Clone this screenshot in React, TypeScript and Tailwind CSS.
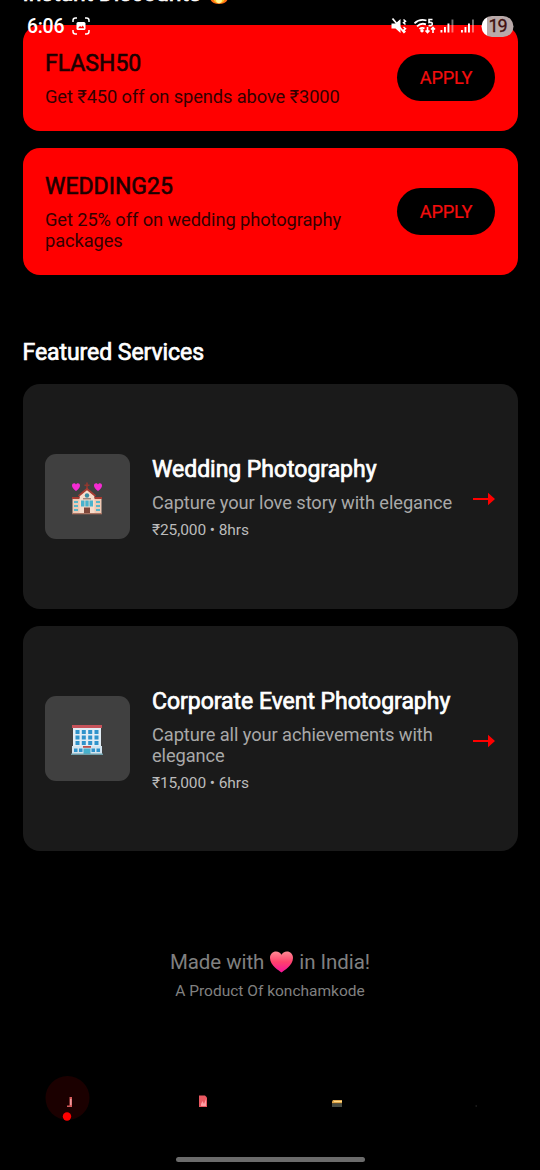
import type { ReactNode } from "react";

function Fire() {
  return (
    <svg className="mt-[3px]" width="22" height="22" viewBox="0 0 22 24">
      <path d="M11 0C13 5 21 8 21 15c0 5-4 8-10 8S1 20 1 15c0-4 2-6 4-8 0 2 1 3 2 3 3-2 2-7 4-10z" fill="#ff6d12" />
      <path d="M12 8c0 4 5 4 5 9 0 3-2 5-6 5s-6-2-6-5c0-3 2-4 3-6 1 1 1 2 2 2 2-1 1-3 2-5z" fill="#ffc928" />
      <ellipse cx="11" cy="18.5" rx="3.2" ry="3.5" fill="#fff59d" />
    </svg>
  );
}

function Chapel() {
  return (
    <svg width="32" height="34" viewBox="0 0 32 34">
      <path d="M5 10C2 7.8 1 6.300 1 4.500 1 2.100 4 1.600 5 3.600 6 1.600 9 2.100 9 4.500 9 6.300 8 7.800 5 10zM27 10c-3-2.200-4-3.700-4-5.500 0-2.400 3-2.900 4-.9 1-2 4-1.500 4 .9 0 1.800-1 3.300-4 5.500z" fill="#f52bd3" />
      <path d="M15.200 1.500h1.600v2h1.700V5h-1.700v4h-1.600V5h-1.700V3.500h1.700z" fill="#93382f" />
      <path d="M1.500 17h29v15.500h-29z" fill="#efc9b4" />
      <path d="M8.500 14L16 8.500l7.500 5.500v18.500h-15z" fill="#f7dccb" />
      <path d="M7.500 15L16 8l8.500 7" fill="none" stroke="#a83c32" strokeWidth="1.800" />
      <path d="M1 16h7.500v2H1zM23.500 16H31v2h-7.500z" fill="#a83c32" />
      <circle cx="16" cy="14.500" r="2.200" fill="#3a8ba0" />
      <path d="M12 17.800h8" stroke="#7b625b" strokeWidth="1" />
      <path d="M10 19.500h3.500v6H10zM14.300 19.500h3.400v6h-3.400zM18.500 19.500H22v6h-3.500z" fill="#49b3cd" />
      <path d="M3 20h4v2H3zM3 24h4v2H3zM3 28h4v2H3zM25 20h4v2h-4zM25 24h4v2h-4zM25 28h4v2h-4z" fill="#58b6c8" />
      <path d="M13 26.500h6v6h-6z" fill="#80483b" />
      <path d="M1 32h30v1.300H1z" fill="#aa7463" />
    </svg>
  );
}

function Office() {
  return (
    <svg width="32" height="34" viewBox="0 0 32 34">
      <path d="M2 3h28v21H2z" fill="#e2edf5" />
      <path d="M1 2h30v3H1z" fill="#c6525a" />
      <path d="M1 23h30v8H1z" fill="#d3e4ef" />
      <path d="M4.500 7h4v4h-4zM10.800 7h4v4h-4zM17.200 7h4v4h-4zM23.500 7h4v4h-4zM4.500 12.500h4v4h-4zM10.800 12.500h4v4h-4zM17.200 12.500h4v4h-4zM23.500 12.500h4v4h-4zM4.500 18h4v4h-4zM10.800 18h4v4h-4zM17.200 18h4v4h-4zM23.500 18h4v4h-4z" fill="#2f93cb" />
      <path d="M3 25.500h3.500v3.500H3zM8 25.500h3.500v3.500H8zM20.500 25.500H24v3.500h-3.500zM25.500 25.500H29v3.500h-3.500z" fill="#2f93cb" />
      <path d="M12.500 25.500h7V31h-7z" fill="#46b1cc" />
      <path d="M12 23h8v1.800h-8z" fill="#bc504d" />
      <path d="M0 30.500h32V32H0z" fill="#6f9ea9" />
    </svg>
  );
}

function Heart() {
  return (
    <svg className="mx-[6px]" width="23" height="22" viewBox="0 0 23 22">
      <defs>
        <linearGradient id="heart" x1="0" y1="0" x2="0" y2="1">
          <stop offset="0" stopColor="#ff8a94" />
          <stop offset=".5" stopColor="#ff416c" />
          <stop offset="1" stopColor="#f5149c" />
        </linearGradient>
      </defs>
      <path d="M11.500 21.500C9.500 19.800 0 14.500 0 7 0 3 2.800.5 6 .500c2.600 0 4.600 1.300 5.500 3.300C12.400 1.800 14.400.5 17 .5c3.200 0 6 2.500 6 6.500 0 7.500-9.500 12.800-11.500 14.500z" fill="url(#heart)" />
    </svg>
  );
}

function StatusBar() {
  return (
    <div className="absolute inset-x-0 top-0 z-10 flex h-[52px] items-center px-[27px] text-white">
      <span className="mt-px text-[19.5px] font-medium tracking-[-0.3px]">6:06</span>
      <svg className="ml-[8px]" width="18" height="18" viewBox="0 0 18 18" fill="none" stroke="#fff" strokeWidth="1.500">
        <path d="M1 5V3.500Q1 1 3.500 1H5M13 1h1.500Q17 1 17 3.500V5M17 13v1.500q0 2.500-2.500 2.500H13M5 17H3.500Q1 17 1 14.500V13" />
        <rect x="4.500" y="5" width="9" height="8" rx="1.500" fill="#fff" stroke="none" />
        <path d="M6 11.200l2-2.200 1.500 1 1.300-1.600 1.500 2.800z" fill="#f00" stroke="none" />
      </svg>
      <div className="ml-auto flex translate-x-[0.5px] items-center">
        <svg width="91" height="20" viewBox="0 0 91 20">
          <g fill="#fff">
            <path d="M1 7.500h4l5-4.500v14l-5-4.500H1z" />
            <path d="M2 2.500L14 17" stroke="#fff" strokeWidth="1.800" />
            <path d="M13 3.500l2 1.700-2 1.600 2 1.700M13 11l2 1.700-2 1.600 2 1.700" fill="none" stroke="#fff" strokeWidth="1.500" />
          </g>
          <g fill="none" stroke="#fff" strokeWidth="1.800">
            <path d="M24 7.300q5-5 12-2.800M26.500 10.300q4-3.800 9-2M29 13q2.500-2 5-.5" />
            <path d="M42 3.500h-3.500v3q3.300-.6 3.300 1.500T38 9.500" strokeWidth="1.600" />
            <path d="M37 11v5.500M35 14.500l2 2 2-2M42.500 17v-5.500M40.500 13.500l2-2 2 2" strokeWidth="1.600" />
          </g>
          <circle cx="31.500" cy="14.800" r="1.700" fill="#fff" />
          <g fill="#fff">
            <path d="M50 14h1.900v2.500H50zM53.500 11h1.900v5.500h-1.900zM57 7.500h1.900v9H57zM70.500 14h1.900v2.500h-1.900zM74 11h1.900v5.500H74zM77.500 7.500h1.900v9h-1.900z" />
            <path d="M61 3.500h1.900v13H61zM81.500 3.500h1.900v13h-1.900z" fillOpacity=".45" />
          </g>
        </svg>
        <div className="flex h-[21px] w-[32px] items-center justify-center overflow-hidden rounded-full bg-[linear-gradient(90deg,#fff_0_17%,#b9a9a9_17%)] text-[18px] leading-[20px] tracking-[-1px] text-[#421010] [-webkit-text-stroke:0.3px_#421010]">19</div>
      </div>
    </div>
  );
}

function Coupon({ code, children, className }: { code: string; children: ReactNode; className: string }) {
  return (
    <article className={`flex items-center justify-between rounded-[17px] bg-[#ff0000] px-[22.5px] ${className}`}>
      <div className="w-[320px] self-start pt-[22.5px]">
        <h3 className="text-[23px] leading-[34px] text-[#1c0000] [-webkit-text-stroke:0.6px_#1c0000]">{code}</h3>
        <p className="mt-[5px] text-[18.280px] leading-[21px] tracking-[-0.09px] text-[#330000]">{children}</p>
      </div>
      <button className="h-[47px] w-[98px] rounded-full bg-black text-[18.280px] tracking-[-0.2px] text-[#f30d0d] [-webkit-text-stroke:0.2px_#f30d0d]">APPLY</button>
    </article>
  );
}

function Service({ icon, title, children, price }: { icon: ReactNode; title: string; children: ReactNode; price: string }) {
  return (
    <article className="flex h-[225px] items-center rounded-[17px] bg-[#1a1a1a] px-[22.5px]">
      <div className="flex size-[84.5px] shrink-0 items-center justify-center rounded-[11px] bg-[#404040] pt-[3px]">{icon}</div>
      <div className="ml-[22.5px] min-w-0 flex-1 pt-[0.5px]">
        <h3 className="text-[23px] leading-[34px] tracking-[-0.03px] text-white [-webkit-text-stroke:0.7px_#fff]">{title}</h3>
        <p className="mt-[5px] text-[18.280px] leading-[21px] tracking-[-0.08px] whitespace-nowrap text-[#a9a9a9]">{children}</p>
        <p className="mt-[7px] text-[15.500px] leading-5 tracking-[-0.08px] text-[#bcbcbc]">{price}</p>
      </div>
      <svg className="mt-[5px] shrink-0" width="22" height="14" viewBox="0 0 22 14" fill="#ff0000">
        <path d="M0 6h15V.8L22 7l-7 6.200V8H0z" />
      </svg>
    </article>
  );
}

export default function App() {
  return (
    <main className="relative flex h-[1170px] w-[540px] flex-col overflow-hidden bg-black font-['Roboto',sans-serif]">
      <StatusBar />
      <div className="flex flex-col px-[22.5px]">
        <div className="-mt-[20px] flex h-[44.5px] items-start gap-[7px]">
          <h2 className="text-[23px] leading-7 tracking-[-0.06px] text-white [-webkit-text-stroke:0.7px_#fff]">Instant Discounts</h2>
          <Fire />
        </div>
        <Coupon code="FLASH50" className="h-[106.5px]">Get ₹450 off on spends above ₹3000</Coupon>
        <Coupon code="WEDDING25" className="mt-[16.5px] h-[127.5px]">Get 25% off on wedding photography<br />packages</Coupon>
        <h2 className="mt-[62px] text-[23px] leading-8 tracking-[-0.06px] text-white [-webkit-text-stroke:0.7px_#fff]">Featured Services</h2>
        <section className="mt-[15px] flex flex-col gap-[17px]">
          <Service icon={<Chapel />} title="Wedding Photography" price="₹25,000 • 8hrs">Capture your love story with elegance</Service>
          <Service icon={<Office />} title="Corporate Event Photography" price="₹15,000 • 6hrs">Capture all your achievements with<br />elegance</Service>
        </section>
      </div>
      <footer className="mt-[97px] flex flex-col items-center text-[#808080]">
        <p className="flex h-7 items-center text-[20.5px] tracking-[-0.06px]">Made with <Heart /> in India!</p>
        <p className="mt-[5px] text-[15.500px] leading-5">A Product Of konchamkode</p>
      </footer>
      <nav className="mt-auto flex h-[94px] shrink-0 flex-col">
        <svg width="540" height="60" viewBox="0 1076 540 60">
          <circle cx="67.500" cy="1098" r="22" fill="#1b0000" />
          <path d="M69.500 1097h2.500v10h-5v-1.500h2.500z" fill="#d45a5b" />
          <path d="M70 1099h1.500v6H70z" fill="#ee989b" />
          <circle cx="67" cy="1116.500" r="4.200" fill="#ff0000" />
          <path d="M199 1095.500h6l2 2v9.500h-8z" fill="#e95861" />
          <path d="M201 1104l1.500-3 1.500 3 2-5v7h-5z" fill="#ff9da4" />
          <path d="M333 1100h9v3.500h-10v-2z" fill="#e1a84c" />
          <path d="M334 1101h8v1h-8z" fill="#ffdb88" />
          <path d="M332 1103.500h10v3.500h-10z" fill="#474b42" />
          <path d="M475.500 1105.500h1.500v1h-1.500z" fill="#303030" />
        </svg>
        <div className="mx-auto mt-[21px] h-[5px] w-[189px] rounded-full bg-[#6b6b6b]" />
      </nav>
    </main>
  );
}
